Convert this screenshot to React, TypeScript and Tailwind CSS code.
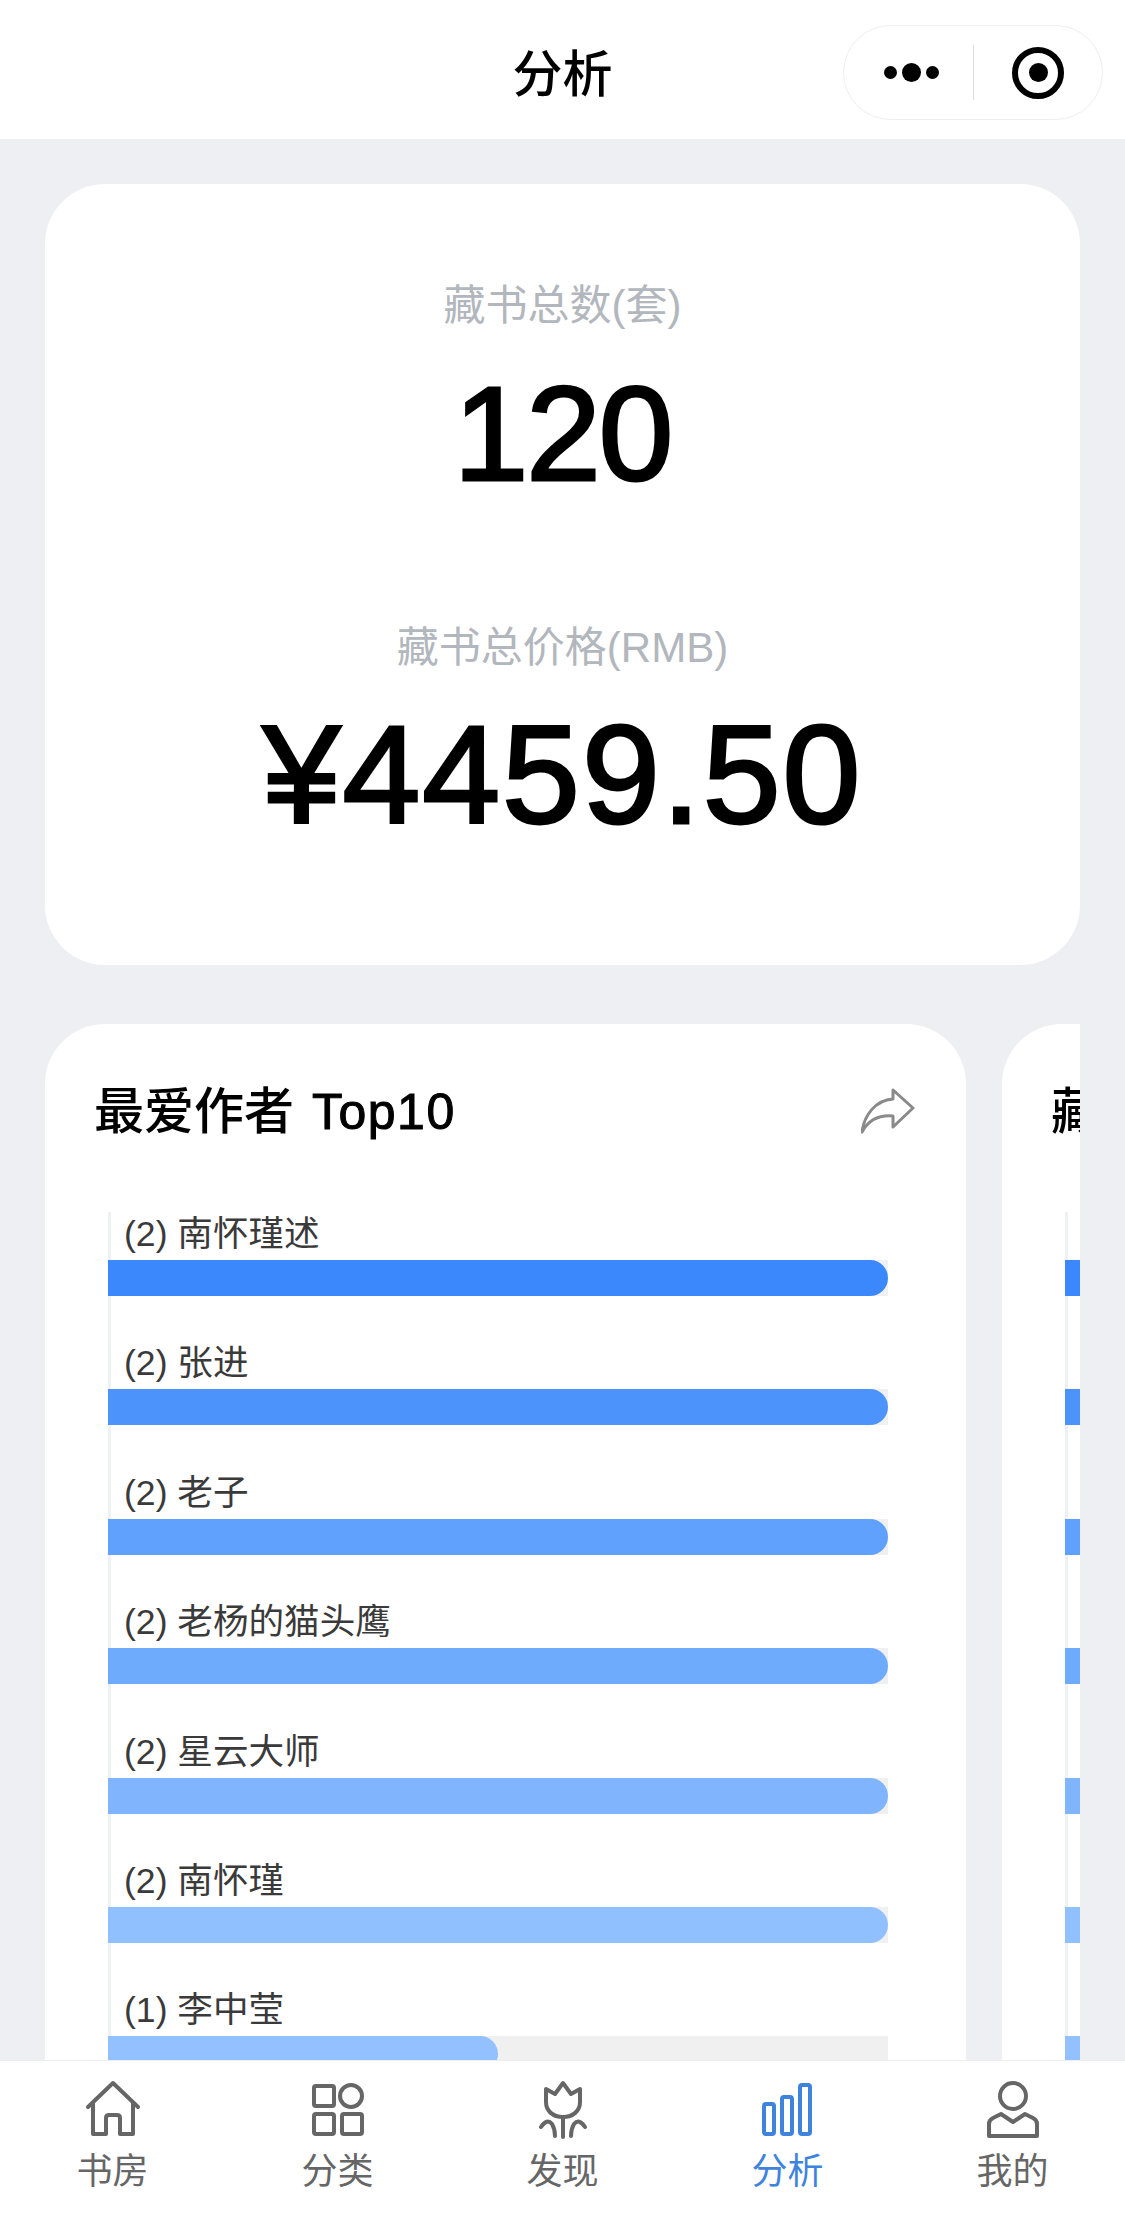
import React from 'react';

type Row = { label: string; bar: string };

const authors: Row[] = [
  { label: '(2) 南怀瑾述', bar: 'w-full bg-[#3a88fb]' },
  { label: '(2) 张进', bar: 'w-full bg-[#4c94fb]' },
  { label: '(2) 老子', bar: 'w-full bg-[#5fa1fc]' },
  { label: '(2) 老杨的猫头鹰', bar: 'w-full bg-[#6fabfd]' },
  { label: '(2) 星云大师', bar: 'w-full bg-[#80b5fd]' },
  { label: '(2) 南怀瑾', bar: 'w-full bg-[#90c0fe]' },
  { label: '(1) 李中莹', bar: 'w-1/2 bg-[#93c1ff]' },
];

const nextCardRows: Row[] = authors.map((row) => ({ label: '', bar: row.bar }));

function ShareIcon() {
  return (
    <svg width="54" height="46" viewBox="0 0 54 46" fill="none" stroke="#8a8a8a" strokeWidth="3" strokeLinejoin="round">
      <path d="M32 2 L52 20 L32 39 V28 C20 27 8 31 1 44 C3 28 14 12 32 11 Z" />
    </svg>
  );
}

function HomeIcon() {
  return (
    <svg width="60" height="60" viewBox="0 0 60 60" fill="none" stroke="currentColor" strokeWidth="4" strokeLinecap="round" strokeLinejoin="round">
      <path d="M5 27 L30 3 L55 27" />
      <path d="M10 24 V54 H23 V38 Q23 35 26 35 H34 Q37 35 37 38 V54 H50 V24" />
    </svg>
  );
}

function GridIcon() {
  return (
    <svg width="60" height="60" viewBox="0 0 60 60" fill="none" stroke="currentColor" strokeWidth="4" strokeLinejoin="round">
      <rect x="6" y="6" width="20" height="20" rx="2" />
      <circle cx="43" cy="16" r="11" />
      <rect x="6" y="34" width="20" height="20" rx="2" />
      <rect x="34" y="34" width="20" height="20" rx="2" />
    </svg>
  );
}

function TulipIcon() {
  return (
    <svg width="60" height="60" viewBox="0 0 60 60" fill="none" stroke="currentColor" strokeWidth="4" strokeLinecap="round" strokeLinejoin="round">
      <path d="M13 9 L22 14 L30 3 L38 14 L47 9 V22 C47 31 40 37 30 37 C20 37 13 31 13 22 Z" />
      <path d="M30 37 V57" />
      <path d="M8 47 Q14 38 19 44 Q22 49 22 56" />
      <path d="M52 47 Q46 38 41 44 Q38 49 38 56" />
    </svg>
  );
}

function BarsIcon() {
  return (
    <svg width="60" height="60" viewBox="0 0 60 60" fill="none" stroke="currentColor" strokeWidth="4" strokeLinejoin="round">
      <rect x="6" y="24" width="10" height="30" rx="2" />
      <rect x="24" y="17" width="10" height="37" rx="2" />
      <rect x="42" y="5" width="10" height="49" rx="2" />
    </svg>
  );
}

function PersonIcon() {
  return (
    <svg width="60" height="60" viewBox="0 0 60 60" fill="none" stroke="currentColor" strokeWidth="4" strokeLinejoin="round">
      <circle cx="30" cy="16" r="13" />
      <path d="M6 56 V44 Q6 40 10 38 L18 34 L30 42 L42 34 L50 38 Q54 40 54 44 V56 Z" />
    </svg>
  );
}

const tabs = [
  { label: '书房', icon: <HomeIcon /> },
  { label: '分类', icon: <GridIcon /> },
  { label: '发现', icon: <TulipIcon /> },
  { label: '分析', icon: <BarsIcon />, active: true },
  { label: '我的', icon: <PersonIcon /> },
];

function BarChart({ rows }: { rows: Row[] }) {
  return (
    <div className="mt-[74px] ml-[63px] w-[780px] border-l-[3px] border-[#eef0f3]">
      {rows.map((row, idx) => (
        <div key={idx} className="h-[129.4px]">
          <div className="h-[48px] pl-[13px] text-[35.6px] leading-[44px] text-[#3a3a3a] whitespace-nowrap">
            {row.label}
          </div>
          <div className="-ml-[3px] h-[36px] bg-[#f0f0f0]">
            <div className={`h-full rounded-r-[18px] ${row.bar}`} />
          </div>
        </div>
      ))}
    </div>
  );
}

function ChartCard({ title, suffix, rows }: { title: string; suffix?: string; rows: Row[] }) {
  return (
    <section className="flex-none w-[921px] h-[1200px] rounded-[60px] bg-white pt-[60px]">
      <div className="flex items-center justify-between pl-[49px] pr-[51px]">
        <h2 className="pt-[2px] text-[50px] leading-[52px] font-medium text-black">
          {title}
          {suffix && (
            <span className="ml-[18px] tracking-[1.5px] [-webkit-text-stroke:1px_#000]">{suffix}</span>
          )}
        </h2>
        <ShareIcon />
      </div>
      <BarChart rows={rows} />
    </section>
  );
}

export default function App() {
  return (
    <div className="flex h-[2230px] flex-col overflow-hidden bg-[#edeff2] font-['Liberation_Sans','Noto_Sans_CJK_SC',sans-serif]">
      <header className="relative flex h-[139px] flex-none items-center justify-center bg-white">
        <h1 className="mt-[10px] text-[50px] font-medium leading-none text-black">分析</h1>
        <div className="absolute left-[843px] top-[25px] flex h-[95px] w-[260px] items-center rounded-[48px] border border-[#eeeeee] bg-white">
          <div className="flex w-[129px] items-center justify-center gap-[5px] pl-[5px]">
            <span className="h-[13px] w-[13px] rounded-full bg-black" />
            <span className="h-[19px] w-[19px] rounded-full bg-black" />
            <span className="h-[13px] w-[13px] rounded-full bg-black" />
          </div>
          <div className="h-[55px] w-px bg-[#dddddd]" />
          <div className="flex flex-1 items-center justify-center">
            <div className="flex h-[52px] w-[52px] items-center justify-center rounded-full border-[6px] border-black">
              <span className="h-[19px] w-[19px] rounded-full bg-black" />
            </div>
          </div>
        </div>
      </header>

      <main className="min-h-0 flex-1 overflow-hidden px-[45px] pt-[45px]">
        <section className="flex h-[781px] flex-col items-center rounded-[60px] bg-white pt-[97px] text-center">
          <p className="text-[42px] leading-[50px] text-[#b2b6bd]">藏书总数(套)</p>
          <p className="mt-[28px] text-[134px] leading-[150px] tracking-[-2px] text-black [-webkit-text-stroke:3px_#000]">120</p>
          <p className="mt-[114px] text-[42px] leading-[50px] text-[#b2b6bd]">藏书总价格(RMB)</p>
          <p className="mt-[27px] text-[140px] leading-[150px] tracking-[2px] text-black [-webkit-text-stroke:3px_#000]">¥4459.50</p>
        </section>
        <div className="mt-[59px] flex gap-[36px] overflow-hidden">
          <ChartCard title="最爱作者" suffix="Top10" rows={authors} />
          <ChartCard title="藏" rows={nextCardRows} />
        </div>
      </main>

      <nav className="flex h-[170px] flex-none border-t border-[#eeeeee] bg-white">
        {tabs.map((tab) => (
          <div
            key={tab.label}
            className={`flex flex-1 flex-col items-center pt-[19px] ${tab.active ? 'text-[#3f84dc]' : 'text-[#666666]'}`}
          >
            {tab.icon}
            <span className="mt-[12px] text-[36px] leading-[40px]">{tab.label}</span>
          </div>
        ))}
      </nav>
    </div>
  );
}
